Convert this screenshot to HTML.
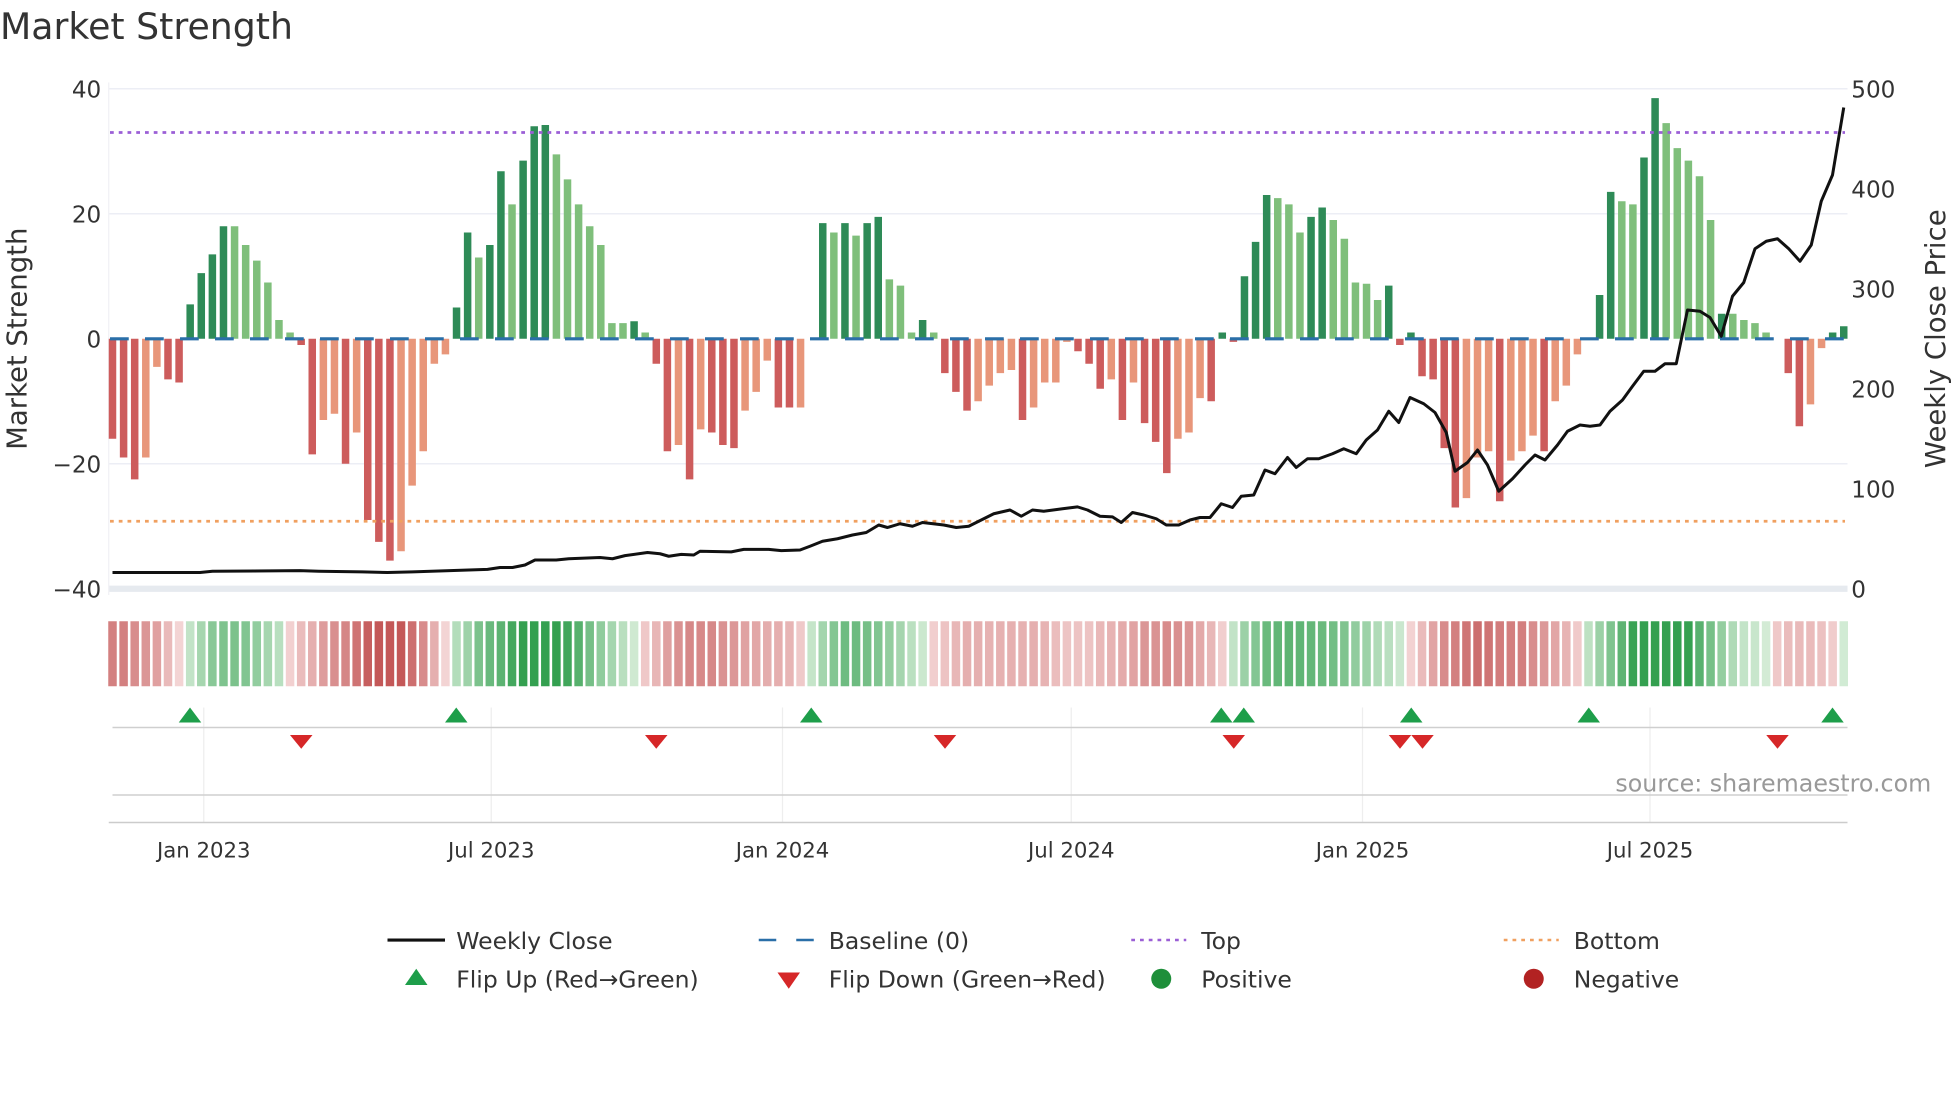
<!DOCTYPE html>
<html><head><meta charset="utf-8"><style>
html,body{margin:0;padding:0;background:#fff;}
svg{display:block;font-family:"DejaVu Sans","Liberation Sans",sans-serif;}
</style></head><body>
<svg id="s" width="1960" height="1102" viewBox="0 0 1568 881.6" xmlns="http://www.w3.org/2000/svg">
<rect width="1568" height="882" fill="#fff"/>
<text x="0" y="31" font-size="29" fill="#333">Market Strength</text>
<g stroke="#eceef5" stroke-width="1.2">
<line x1="87" x2="1478" y1="71" y2="71"/><line x1="87" x2="1478" y1="171" y2="171"/>
<line x1="87" x2="1478" y1="371" y2="371"/></g>
<line x1="87" x2="1478" y1="471" y2="471" stroke="#e6eaef" stroke-width="5"/>
<line x1="87" x2="87" y1="66" y2="476" stroke="#f0f0f5" stroke-width="1"/>
<g font-size="18.5" fill="#333" text-anchor="end">
<text x="81" y="78">40</text><text x="81" y="178">20</text><text x="81" y="278">0</text>
<text x="81" y="378">−20</text><text x="81" y="478">−40</text></g>
<g font-size="18.5" fill="#333">
<text x="1481" y="78">500</text><text x="1481" y="158">400</text><text x="1481" y="238">300</text>
<text x="1481" y="318">200</text><text x="1481" y="398">100</text><text x="1481" y="478">0</text></g>
<text transform="translate(21,271) rotate(-90)" font-size="22" fill="#333" text-anchor="middle">Market Strength</text>
<text transform="translate(1556,271) rotate(-90)" font-size="22" fill="#333" text-anchor="middle">Weekly Close Price</text>
<g id="bars"></g>
<line x1="88" x2="1476" y1="271" y2="271" stroke="#2a6fa8" stroke-width="2.5" stroke-dasharray="15 13"/>
<line x1="88" x2="1476" y1="106" y2="106" stroke="#9b5fd6" stroke-width="2.2" stroke-dasharray="3 4"/>
<line x1="88" x2="1476" y1="417" y2="417" stroke="#f0a060" stroke-width="2.2" stroke-dasharray="3 4"/>
<polyline id="line" fill="none" stroke="#111" stroke-width="2.4" stroke-linejoin="round"/>
<g id="strip"></g>
<g stroke="#eeeeee" stroke-width="1">
<line x1="163" x2="163" y1="566" y2="658"/><line x1="393" x2="393" y1="566" y2="658"/>
<line x1="626" x2="626" y1="566" y2="658"/><line x1="857" x2="857" y1="566" y2="658"/>
<line x1="1090" x2="1090" y1="566" y2="658"/><line x1="1320" x2="1320" y1="566" y2="658"/></g>
<line x1="90" x2="1478" y1="582" y2="582" stroke="#cfcfcf" stroke-width="1.2"/>
<line x1="90" x2="1478" y1="636" y2="636" stroke="#cfcfcf" stroke-width="1.2"/>
<line x1="87" x2="1478" y1="658" y2="658" stroke="#cccccc" stroke-width="1.2"/>
<g id="marks"></g>
<text x="1545" y="633" font-size="19" fill="#999" text-anchor="end">source: sharemaestro.com</text>
<g font-size="17" fill="#333" text-anchor="middle">
<text x="163" y="686">Jan 2023</text><text x="393" y="686">Jul 2023</text><text x="626" y="686">Jan 2024</text>
<text x="857" y="686">Jul 2024</text><text x="1090" y="686">Jan 2025</text><text x="1320" y="686">Jul 2025</text></g>
<g font-size="18.8" fill="#333">
<line x1="310" x2="356" y1="752" y2="752" stroke="#111" stroke-width="2.5"/><text x="365" y="759">Weekly Close</text>
<line x1="607" x2="651" y1="752" y2="752" stroke="#2a6fa8" stroke-width="2" stroke-dasharray="14 16"/><text x="663" y="759">Baseline (0)</text>
<line x1="905" x2="949" y1="752" y2="752" stroke="#9b5fd6" stroke-width="2" stroke-dasharray="3 4"/><text x="961" y="759">Top</text>
<line x1="1203" x2="1247" y1="752" y2="752" stroke="#f0a060" stroke-width="2" stroke-dasharray="3 4"/><text x="1259" y="759">Bottom</text>
<polygon points="324,788 342,788 333,775" fill="#1e9e4a"/><text x="365" y="790">Flip Up (Red→Green)</text>
<polygon points="622,778 640,778 631,791" fill="#d62728"/><text x="663" y="790">Flip Down (Green→Red)</text>
<circle cx="929" cy="783" r="8" fill="#1e8f3a"/><text x="961" y="790">Positive</text>
<circle cx="1227" cy="783" r="8" fill="#b22222"/><text x="1259" y="790">Negative</text>
</g>
</svg>
<script>
var S="-16,-19,-22.5,-19L,-4.5L,-6.5,-7,5.5,10.5,13.5,18,18L,15L,12.5L,9L,3L,1L,-1,-18.5,-13L,-12L,-20,-15L,-29,-32.5,-35.5,-34L,-23.5L,-18L,-4L,-2.5L,5,17,13L,15,26.8,21.5L,28.5,34,34.2,29.5L,25.5L,21.5L,18L,15L,2.5L,2.5L,2.8,1L,-4,-18,-17L,-22.5,-14.5L,-15,-17,-17.5,-11.5L,-8.5L,-3.5L,-11,-11,-11L,"+
"0,18.5,17L,18.5,16.5L,18.5,19.5,9.5L,8.5L,1L,3,1L,-5.5,-8.5,-11.5,-10L,-7.5L,-5.5L,-5L,-13,-11L,-7L,-7L,-0.5L,-2,-4,-8,-6.5L,-13,-7L,-13.5,-16.5,-21.5,-16L,-15L,-9.5L,-10,1,-0.5,10,15.5,23,22.5L,21.5L,17L,19.5,21,19L,16L,9L,8.8L,6.2L,8.5,-1,1,-6,-6.5,-17.5,-27,-25.5L,-19L,-18L,-26,-19.5L,-18L,-15.5L,-18,-10L,-7.5L,-2.5L,0,7,23.5,22L,21.5L,29,38.5,34.5L,30.5L,28.5L,26L,19L,4,4L,3L,2.5L,1L,0,-5.5,-14,-10.5L,-1.5L,1,2";
var a=S.split(","),N=a.length,st=(1475-90)/(N-1),NS="http://www.w3.org/2000/svg";
function el(t,at,p){var e=document.createElementNS(NS,t);for(var k in at)e.setAttribute(k,at[k]);p.appendChild(e);return e;}
var B=document.getElementById("bars"),T=document.getElementById("strip");
var vals=[];
for(var i=0;i<N;i++){var L=a[i].indexOf("L")>=0,v=parseFloat(a[i]);vals.push(v);var x=90+i*st;
 var c=v>=0?(L?"#7fbf7b":"#2e8b57"):(L?"#e8967a":"#cd5c5c");
 if(v!=0){var h=Math.abs(v)*5;el("rect",{x:x-3,y:v>0?271-h:271,width:6,height:h,fill:c},B);}
}
function mix(c1,c2,t){var r=[];for(var j=0;j<3;j++)r.push(Math.round(c1[j]+(c2[j]-c1[j])*t));return "rgb("+r+")";}
for(var i=0;i<N;i++){var x=90+i*st;var s=0,n=0;for(var k=-2;k<=2;k++){if(vals[i+k]!==undefined){s+=vals[i+k];n++;}}var m=s/n;
 var t=Math.min(1,Math.abs(m)/28);
 var c=m>=0?mix([212,236,214],[52,160,80],t):mix([244,214,214],[196,88,88],t);
 el("rect",{x:x-3.4,y:497,width:6.8,height:52,fill:c},T);}
var P="90,458 160,458 170,457 240,456.5 255,457 290,457.5 310,458 330,457.5 360,456.5 390,455.5 400,454 410,454 420,452 428,448 445,448 455,447 480,446 490,447 500,444.5 518,442 528,443 535,445 545,443.5 555,444 560,441 585,441.5 595,439.5 615,439.5 625,440.5 640,440 648,437 658,433 670,431 682,428 693,426 703,420 710,422 720,419 730,421 738,418 755,420 765,422 775,421 785,416 795,411 808,408 817,413 826,408 835,409 850,407 862,405.5 870,408 880,413 890,413.5 897,418 906,410 915,412 925,415 933,420 943,420 952,416 960,414 968,414 977,403 986,406 993,397 1003,396 1012,376 1020,379 1030,366 1037,374 1046,367 1055,367 1066,363 1075,359 1085,363 1093,352 1102,344 1111,329 1119,338 1128,318 1139,323 1148,330 1157,346 1164,377 1174,370 1182,360 1190,372 1199,393 1210,383 1220,372 1228,364 1236,368 1246,356 1254,345 1264,340 1272,341 1280,340 1288,329 1298,320 1306,309 1315,297 1324,297 1332,291 1341,291 1350,248 1360,249 1368,254 1377,269 1386,237 1395,226 1404,199 1413,193 1422,191 1431,199 1440,209 1449,196 1457,161 1466,140 1475,86";
document.getElementById("line").setAttribute("points",P);
var M=document.getElementById("marks");
[152,365,649,977,995,1129,1271,1466].forEach(function(x){el("polygon",{points:(x-9)+",578 "+(x+9)+",578 "+x+",566",fill:"#1e9e4a"},M);});
[241,525,756,987,1120,1138,1422].forEach(function(x){el("polygon",{points:(x-9)+",588 "+(x+9)+",588 "+x+",599",fill:"#d62728"},M);});
</script>
</body></html>
